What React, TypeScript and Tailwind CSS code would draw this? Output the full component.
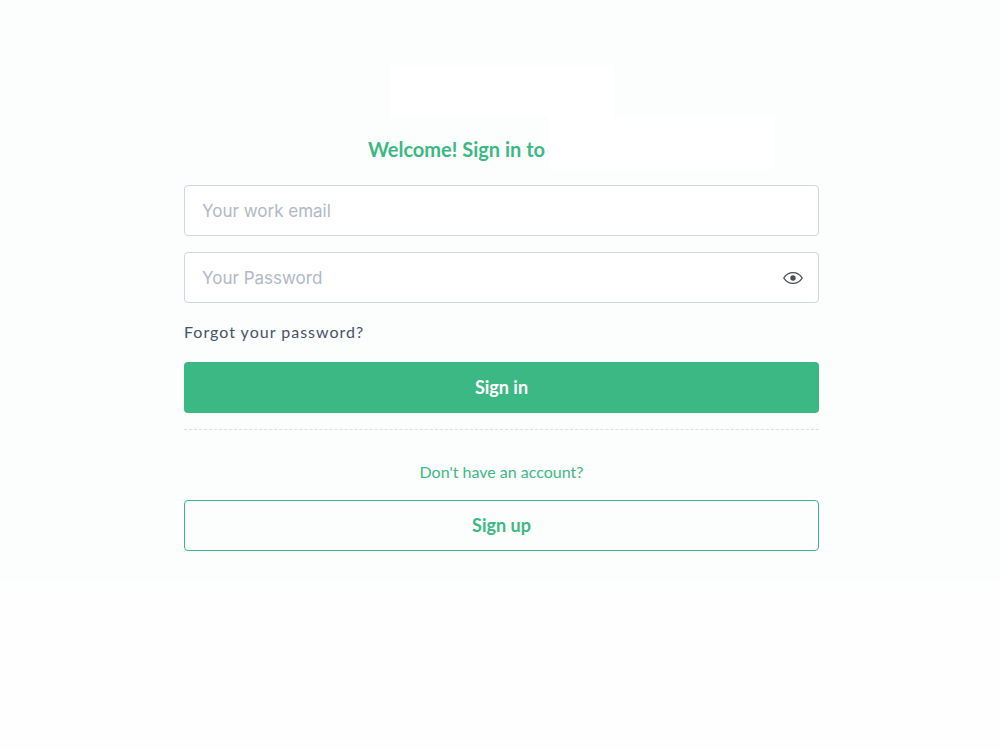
import React, { useState } from 'react';

interface TextFieldProps {
  id: string;
  type: string;
  label: string;
  value: string;
  onChange: (value: string) => void;
  children?: React.ReactNode;
}

const TextField: React.FC<TextFieldProps> = ({ id, type, label, value, onChange, children }) => {
  return (
    <div className="flex items-center h-[51px] rounded border border-[#cfd6de] bg-white focus-within:border-[#3cb884]">
      <input
        id={id}
        type={type}
        value={value}
        placeholder={label}
        aria-label={label}
        onChange={(e) => onChange(e.target.value)}
        className="flex-1 min-w-0 py-3 pl-[17px] bg-transparent font-[Inter,sans-serif] text-[17px] leading-6 text-[#475268] placeholder:text-[#b0b9c5] outline-none"
      />
      {children}
    </div>
  );
};

const EyeIcon = () => (
  <svg width="20" height="14" viewBox="0 0 20 14" fill="none" aria-hidden="true">
    <path
      d="M0.8 7C3 3.4 6.3 1.6 10 1.6S17 3.4 19.2 7C17 10.6 13.7 12.4 10 12.4S3 10.6 0.8 7Z"
      stroke="#4a4f5a"
      strokeWidth="1.4"
      strokeLinejoin="round"
    />
    <circle cx="10" cy="7" r="2.7" fill="#4a4f5a" />
  </svg>
);

export default function App() {
  const [email, setEmail] = useState('');
  const [password, setPassword] = useState('');
  const [showPassword, setShowPassword] = useState(false);

  return (
    <div className="min-h-screen bg-[#fefefe] font-[Lato,sans-serif] text-[#3cb884]">
      <main className="bg-[#fcfefd] pt-[65px] pb-[30px] pl-[3px]">
        <form
          className="flex flex-col w-full max-w-[635px] mx-auto"
          onSubmit={(e) => e.preventDefault()}
        >
          <div className="w-56 h-[52px] mx-auto bg-white" />
          {/* the name block is wider than its slot and runs past it */}
          <div className="flex justify-center items-center h-[52px]">
            <h1 className="pt-3 text-[20px] leading-6 font-bold whitespace-nowrap">
              Welcome! Sign in to
            </h1>
            <div className="w-[86px] ml-1 h-full">
              <div className="w-[226px] h-full bg-white" />
            </div>
          </div>

          <div className="flex flex-col gap-4 mt-4">
            <TextField id="email" type="email" label="Your work email" value={email} onChange={setEmail} />
            <TextField
              id="password"
              type={showPassword ? 'text' : 'password'}
              label="Your Password"
              value={password}
              onChange={setPassword}
            >
              <button
                type="button"
                aria-label="Show password"
                onClick={() => setShowPassword(!showPassword)}
                className="px-[15px]"
              >
                <EyeIcon />
              </button>
            </TextField>
          </div>

          <a href="#forgot" className="self-start mt-[17px] mb-[18px] text-[16px] leading-6 tracking-[1px] text-[#475268]">
            Forgot your password?
          </a>

          <button type="submit" className="h-[51px] rounded bg-[#3cb884] text-[18px] font-bold text-white">
            Sign in
          </button>

          <hr className="mt-4 border-t border-dashed border-[#dadfe2]" />

          <p className="mt-[30px] mb-4 text-center text-[16px] leading-6">Don't have an account?</p>

          <button type="button" className="h-[51px] rounded border border-[#3cb884] text-[18px] font-bold">
            Sign up
          </button>
        </form>
      </main>
    </div>
  );
}
